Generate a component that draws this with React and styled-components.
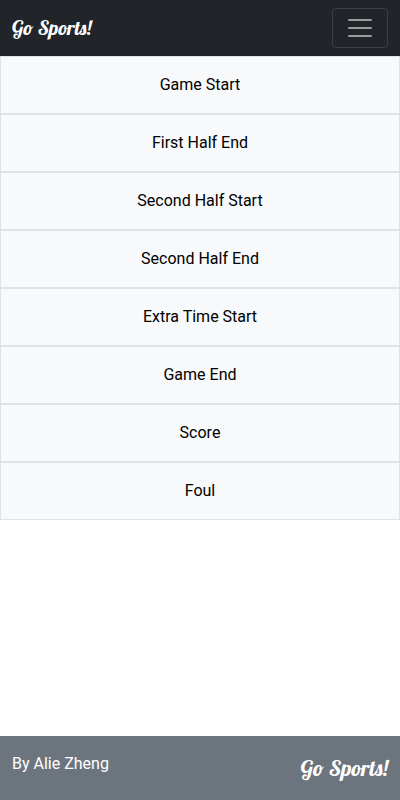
import React from 'react';
import styled, { createGlobalStyle } from 'styled-components';

const GlobalStyle = createGlobalStyle`
  *, *::before, *::after { box-sizing: border-box; }
  body {
    margin: 0;
    background: #fff;
    color: #212529;
    font-family: Roboto, "Liberation Sans", sans-serif;
    font-size: 16px;
    line-height: 24px;
  }
`;

const Page = styled.div`
  display: flex;
  flex-direction: column;
  min-height: 100vh;
`;

const Navbar = styled.header`
  display: flex;
  align-items: center;
  justify-content: space-between;
  padding: 8px 12px;
  background: #212529;
`;

const Brand = styled.a`
  color: #fff;
  font-family: Lobster, "Liberation Serif", serif;
  font-size: ${({ $size }) => $size}px;
  font-weight: 400;
  line-height: 32px;
  text-decoration: none;
  white-space: nowrap;
`;

const Toggler = styled.button`
  display: flex;
  padding: 4px 12px;
  border: 1px solid rgba(255, 255, 255, 0.12);
  border-radius: 4px;
  background: transparent;
  color: rgba(255, 255, 255, 0.55);
  cursor: pointer;
`;

const EventList = styled.main`
  display: flex;
  flex-direction: column;
  flex: 1;
`;

const EventButton = styled.button`
  padding: 16px;
  border: 1px solid #dee2e6;
  background: #f8f9fa;
  color: #000;
  font: inherit;
  text-align: center;
  cursor: pointer;

  &:hover { background: #e9ecef; }
`;

const Footer = styled.footer`
  display: flex;
  align-items: flex-start;
  justify-content: space-between;
  padding: 16px 12px;
  background: #6c757d;
  color: #fff;
`;

const Credit = styled.span`
  line-height: 24px;
`;

const events = [
  'Game Start',
  'First Half End',
  'Second Half Start',
  'Second Half End',
  'Extra Time Start',
  'Game End',
  'Score',
  'Foul',
];

export default function App() {
  return (
    <Page>
      <GlobalStyle />
      <Navbar>
        <Brand href="#" $size={20}>Go Sports!</Brand>
        <Toggler type="button" aria-label="Toggle navigation">
          <svg width="30" height="30" viewBox="0 0 30 30" fill="none" stroke="currentColor" strokeWidth="2" strokeLinecap="round" aria-hidden="true">
            <path d="M4 7h22M4 15h22M4 23h22" />
          </svg>
        </Toggler>
      </Navbar>
      <EventList>
        {events.map((name) => (
          <EventButton key={name} type="button">{name}</EventButton>
        ))}
      </EventList>
      <Footer>
        <Credit>By Alie Zheng</Credit>
        <Brand href="#" $size={22}>Go Sports!</Brand>
      </Footer>
    </Page>
  );
}
